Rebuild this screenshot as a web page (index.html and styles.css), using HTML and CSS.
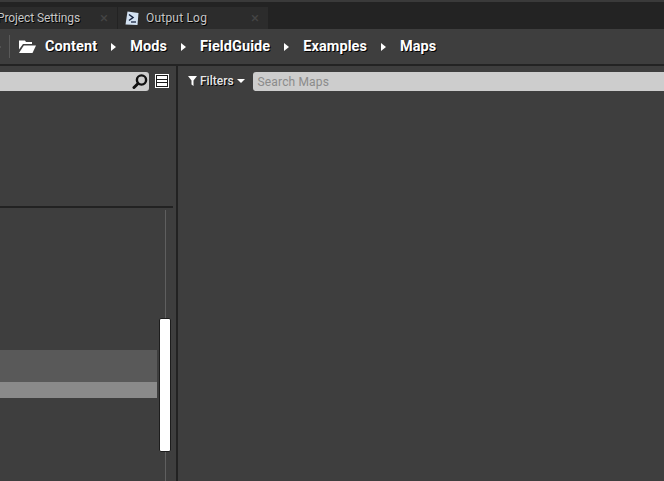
FILE: index.html
```html
<!DOCTYPE html>
<html lang="en">
<head>
<meta charset="utf-8">
<title>Content Browser</title>
<link rel="stylesheet" href="styles.css">
</head>
<body>
<div class="app">
  <div class="tabbar">
    <div class="tab tab-first">
      <span class="tab-label tab-label-tight">Project Settings</span>
      <span class="tab-close">×</span>
    </div>
    <div class="tab tab-second">
      <svg class="tab-icon" width="14" height="15" viewBox="0 0 14 15">
        <path d="M2.500 0.500L13.500 2 12.500 14 0.500 13.500z" fill="#d3e2f2"/>
        <path d="M4 3.500l4 3-4 3" fill="none" stroke="#16233f" stroke-width="1.500"/>
        <path d="M6 11h5" stroke="#16233f" stroke-width="1.300"/>
      </svg>
      <span class="tab-label">Output Log</span>
      <span class="tab-close">×</span>
    </div>
  </div>
  <div class="crumbbar">
    <span class="arrow arrow-cut"></span>
    <span class="sep"></span>
    <svg class="folder" width="17" height="13" viewBox="0 0 17 13">
      <path d="M0 0.500h6l1 1.500h6v2H4L0 9.500z" fill="#fff"/>
      <path d="M4.800 5.500H17l-3.500 7.500H0z" fill="#fff"/>
    </svg>
    <span class="crumb">Content</span><span class="arrow"></span>
    <span class="crumb">Mods</span><span class="arrow"></span>
    <span class="crumb">FieldGuide</span><span class="arrow"></span>
    <span class="crumb">Examples</span><span class="arrow"></span>
    <span class="crumb">Maps</span>
  </div>
  <div class="rule"></div>
  <div class="panes">
    <div class="left">
      <div class="left-tools">
        <div class="searchbox">
          <svg width="16" height="15" viewBox="0 0 16 15">
            <circle cx="9.500" cy="6" r="4.600" fill="none" stroke="#111" stroke-width="2.400"/>
            <path d="M5.800 9.800L2 13.500" stroke="#111" stroke-width="3" stroke-linecap="round"/>
          </svg>
        </div>
        <div class="listbtn"><i></i><i></i><i></i></div>
      </div>
      <div class="left-top"></div>
      <div class="left-rule"></div>
      <div class="left-list">
        <div class="rows">
          <div class="row-a"></div>
          <div class="row-b"></div>
        </div>
        <div class="track"><div class="thumb"></div></div>
      </div>
    </div>
    <div class="divider"></div>
    <div class="right">
      <div class="right-tools">
        <svg class="funnel" width="9" height="10" viewBox="0 0 9 10">
          <path d="M0 0h9L5.500 4.500V10L3.500 8.500V4.500z" fill="#fff"/>
        </svg>
        <span class="filters">Filters</span>
        <span class="caret"></span>
        <div class="mapsearch">Search Maps</div>
      </div>
    </div>
  </div>
</div>
</body>
</html>
```
FILE: styles.css
```css
* { box-sizing: border-box; }
html, body { margin: 0; height: 100%; background: #3e3e3e; }
body { overflow: hidden; font-family: Roboto, "Liberation Sans", sans-serif; }
.app { width: 664px; height: 481px; display: flex; flex-direction: column; overflow: hidden; }

.tabbar { height: 29px; flex: none; display: flex; align-items: flex-end; gap: 1px; background: #232323; border-top: 2px solid #3a3a3a; }
.tab { height: 22px; display: flex; align-items: center; background: #2c2c2c; flex: none; position: relative; }
.tab-first { width: 147px; margin-left: -30px; padding-left: 27px; }
.tab-second { width: 150px; padding-left: 7px; }
.tab-label { font-size: 12px; color: #c6c6c6; letter-spacing: 0.2px; text-shadow: 1px 1px 0 #000; white-space: nowrap; }
.tab-label-tight { letter-spacing: -0.1px; }
.tab-icon { margin-right: 7px; flex: none; }
.tab-close { position: absolute; right: 9px; top: 3px; color: #444; font-size: 15px; line-height: 16px; }

.crumbbar { height: 35px; flex: none; display: flex; align-items: center; background: #3e3e3e; }
.sep { width: 1px; height: 23px; background: #5a5a5a; margin-right: 9px; }
.folder { margin-right: 9px; flex: none; }
.crumb { font-size: 14.5px; font-weight: 700; color: #fff; letter-spacing: 0.08px; text-shadow: 1px 1px 0 #000; white-space: nowrap; }
.arrow { width: 0; height: 0; margin: 1px 14px 0 14px; border-left: 5px solid #fff; border-top: 4px solid transparent; border-bottom: 4px solid transparent; }
.arrow-cut { margin: 1px 8px 0 -4px; border-left-color: #777; flex: none; }

.rule { height: 2px; flex: none; background: #232323; }

.panes { flex: 1; display: flex; min-height: 0; }
.left { width: 176px; flex: none; display: flex; flex-direction: column; overflow: hidden; }
.divider { width: 2px; flex: none; background: #222; }
.right { flex: 1; min-width: 0; }

.left-tools { height: 25px; flex: none; display: flex; padding-top: 6px; }
.searchbox { width: 149px; height: 19px; background: #cdcdcd; border-radius: 0 3px 3px 0; display: flex; align-items: center; justify-content: flex-end; padding-right: 1px; }
.listbtn { width: 14px; height: 14px; margin: 2px 0 0 6px; border: 1px solid #fff; padding: 1px; display: flex; flex-direction: column; gap: 1px; background: #1c1c1c; }
.listbtn i { display: block; flex: 1; background: #fff; }

.left-top { height: 115px; flex: none; }
.left-rule { height: 2px; width: 173px; flex: none; background: #222; }
.left-list { flex: 1; position: relative; display: flex; padding-top: 142px; }
.rows { width: 157px; flex: none; }
.row-a { height: 32px; background: #595959; }
.row-b { height: 16px; background: #8a8a8a; }
.track { position: absolute; left: 165px; top: 2px; bottom: 0; width: 1px; background: #5f5f5f; }
.thumb { position: absolute; left: -6px; top: 108px; width: 12px; height: 134px; background: #fff; border: 1px solid #1d1d1d; border-radius: 2px; }

.right-tools { height: 25px; display: flex; align-items: center; padding: 5px 0 0 10px; }
.funnel { flex: none; margin-right: 3px; }
.filters { font-size: 12px; font-weight: 500; color: #e6e6e6; text-shadow: 1px 1px 0 #000; margin-right: 3px; }
.caret { width: 0; height: 0; border-top: 4px solid #fff; border-left: 4px solid transparent; border-right: 4px solid transparent; margin-right: 8px; }
.mapsearch { flex: 1; height: 19px; margin-top: 1px; padding: 1px 0 0 5px; line-height: 18px; background: #cdcdcd; border-radius: 3px 0 0 3px; font-size: 12px; color: #8b8b8b; letter-spacing: 0.15px; }
```
